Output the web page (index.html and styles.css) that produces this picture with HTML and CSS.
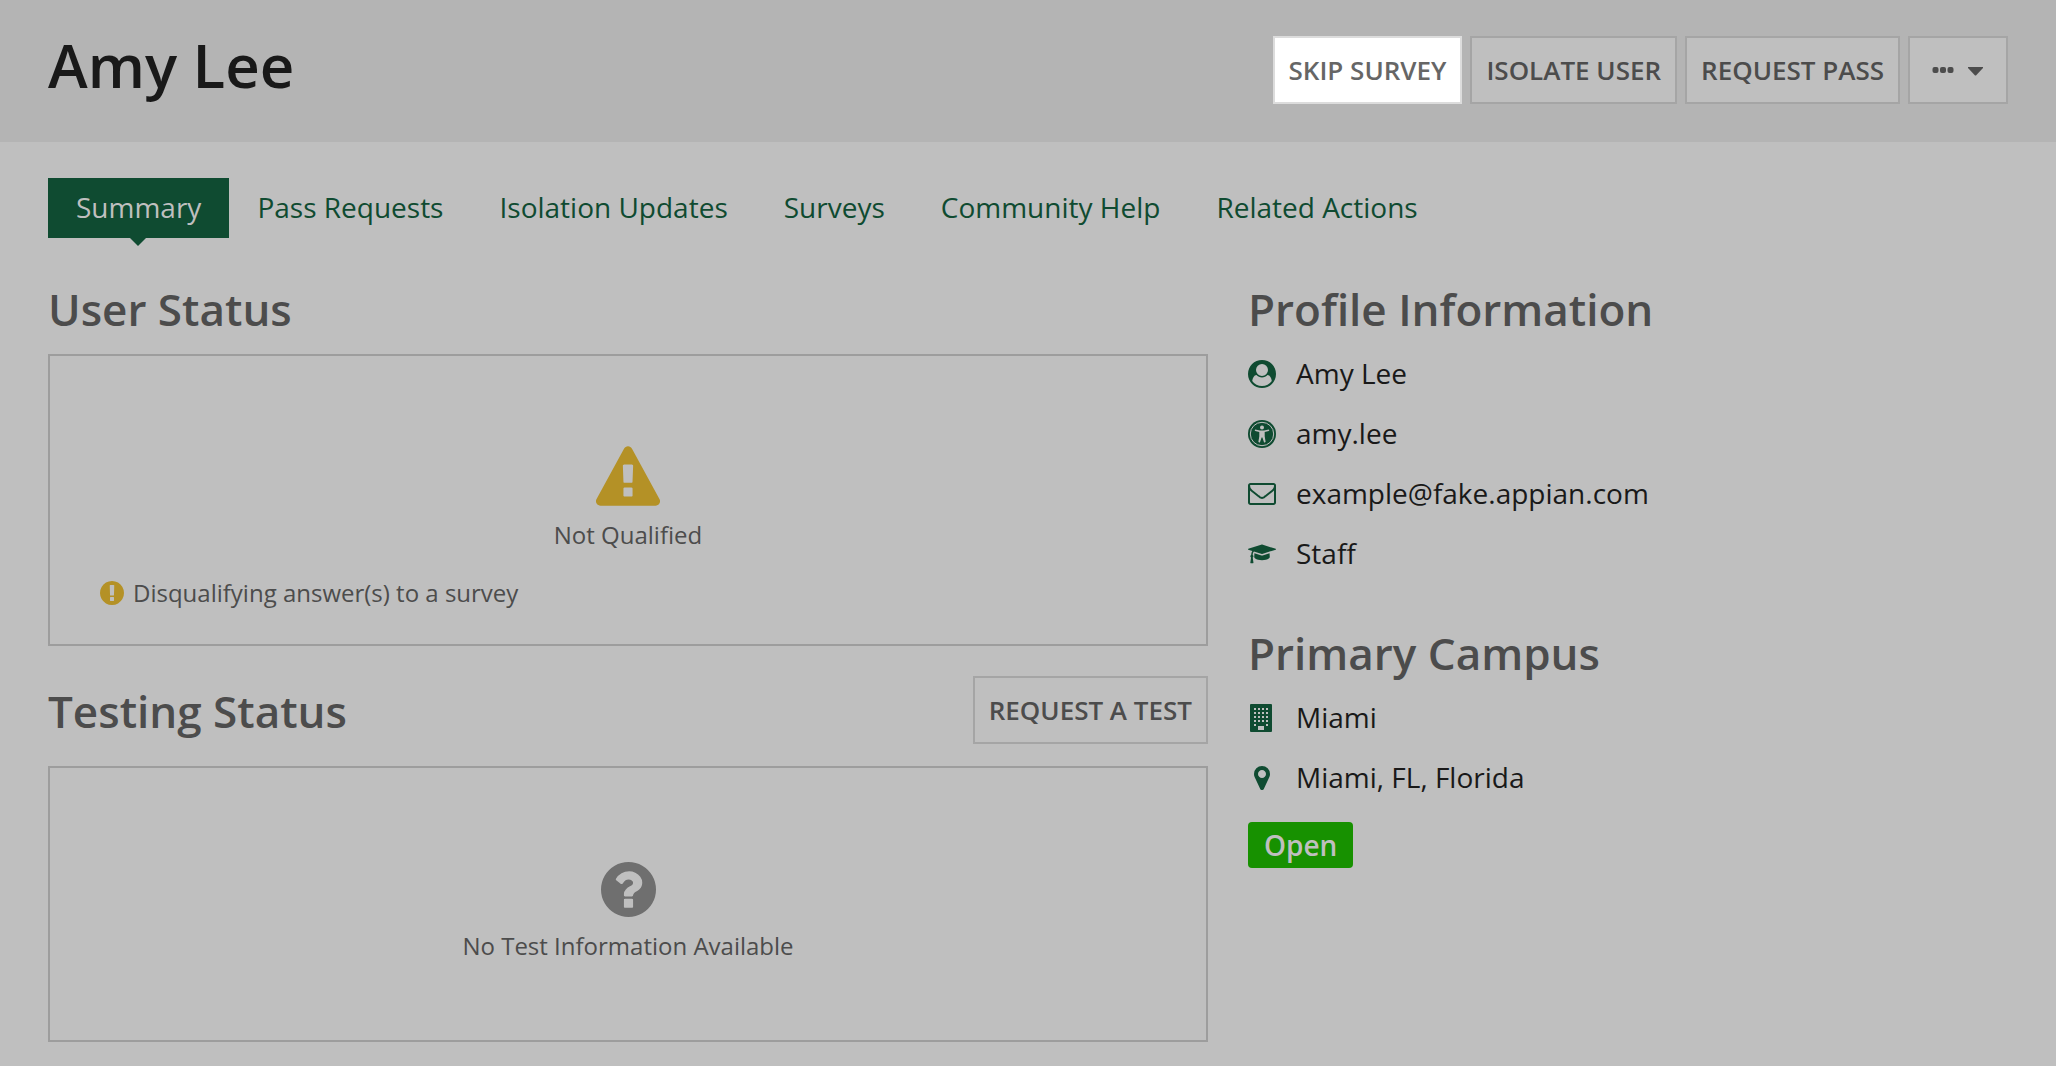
FILE: index.html
```html
<!DOCTYPE html>
<html lang="en">
<head>
<meta charset="utf-8">
<meta name="viewport" content="width=device-width, initial-scale=1">
<title>Amy Lee</title>
<link rel="stylesheet" href="styles.css">
</head>
<body>
<header class="header">
  <h1 class="title">Amy Lee</h1>
  <div class="actions">
    <button type="button" class="button button-active">SKIP SURVEY</button>
    <button type="button" class="button">ISOLATE USER</button>
    <button type="button" class="button">REQUEST PASS</button>
    <button type="button" class="button button-more" aria-label="More actions">
      <svg width="52" height="12" viewBox="0 0 52 12" aria-hidden="true"><rect x="0.500" y="3" width="6" height="6" rx="2"/><rect x="8" y="3" width="6" height="6" rx="2"/><rect x="15.500" y="3" width="6" height="6" rx="2"/><path d="M36 3h15v1l-7 7.500h-1l-7-7.500z"/></svg>
    </button>
  </div>
</header>
<nav class="tabs">
  <a href="#summary" class="tab tab-selected" aria-current="page">Summary</a>
  <a href="#passes" class="tab">Pass Requests</a>
  <a href="#isolation" class="tab">Isolation Updates</a>
  <a href="#surveys" class="tab">Surveys</a>
  <a href="#help" class="tab">Community Help</a>
  <a href="#actions" class="tab">Related Actions</a>
</nav>
<main class="columns">
  <div>
    <section>
      <h2 class="heading">User Status</h2>
      <div class="card card-user">
        <svg class="warning" width="64" height="60" viewBox="0 0 1792 1664" aria-hidden="true"><path d="M1024 1375v-190q0-14-9.500-23.500t-22.500-9.500h-192q-13 0-22.500 9.500t-9.500 23.500v190q0 14 9.500 23.500t22.500 9.500h192q13 0 22.500-9.500t9.500-23.500zm-2-374l18-459q0-12-10-19-13-11-24-11h-220q-11 0-24 11-10 7-10 21l17 457q0 10 10 16.500t24 6.500h185q14 0 23.500-6.500t10.500-16.500zm-14-934l768 1408q35 63-2 126-17 29-46.500 46t-63.500 17h-1536q-34 0-63.500-17t-46.500-46q-37-63-2-126l768-1408q17-31 47-49t65-18 65 18 47 49z"/></svg>
        <p class="status">Not Qualified</p>
        <p class="reason"><svg class="warning" width="24" height="24" viewBox="128 128 1536 1536" aria-hidden="true"><path d="M896 128q209 0 385.500 103t279.500 279.500 103 385.500-103 385.500-279.500 279.500-385.500 103-385.500-103-279.500-279.500-103-385.500 103-385.500 279.500-279.500 385.500-103zm128 1247v-190q0-14-9-23.500t-22-9.500h-192q-13 0-23 10t-10 23v190q0 13 10 23t23 10h192q13 0 22-9.500t9-23.500zm-2-344l18-621q0-12-10-18-10-8-24-8h-220q-14 0-24 8-10 6-10 18l17 621q0 10 10 17.500t24 7.500h185q14 0 23.500-7.500t10.500-17.500z"/></svg>Disqualifying answer(s) to a survey</p>
      </div>
    </section>
    <section>
      <div class="heading-row">
        <h2 class="heading">Testing Status</h2>
        <button type="button" class="button">REQUEST A TEST</button>
      </div>
      <div class="card card-test">
        <svg class="unknown" width="55" height="55" viewBox="128 128 1536 1536" aria-hidden="true"><path d="M1024 1376v-192q0-14-9-23t-23-9h-192q-14 0-23 9t-9 23v192q0 14 9 23t23 9h192q14 0 23-9t9-23zm256-672q0-88-55.500-163t-138.500-116-170-41q-243 0-371 213-15 24 8 42l132 100q7 6 19 6 16 0 25-12 53-68 86-92 34-24 86-24 48 0 85.500 26t37.500 59q0 38-20 61t-68 45q-63 28-115.500 86.500t-52.500 125.500v36q0 14 9 23t23 9h192q14 0 23-9t9-23q0-19 21.500-49.500t54.500-49.500q32-18 49-28.500t46-35 44.500-48 28-60.500 12.500-81zm384 192q0 209-103 385.500t-279.500 279.500-385.500 103-385.500-103-279.500-279.500-103-385.500 103-385.500 279.500-279.500 385.500-103 385.500 103 279.500 279.500 103 385.500z"/></svg>
        <p class="status">No Test Information Available</p>
      </div>
    </section>
  </div>
  <aside class="side">
    <section>
      <h2 class="heading">Profile Information</h2>
      <ul class="facts">
        <li class="fact"><svg class="icon" width="28" height="28" viewBox="0 0 1792 1792" aria-hidden="true"><path d="M1523 1339q-22-155-87.500-257.500t-184.500-118.500q-67 74-159.500 115.500t-195.500 41.500-195.500-41.500-159.500-115.500q-119 16-184.500 118.500t-87.500 257.500q106 150 271 237.500t356 87.500 356-87.500 271-237.500zm-243-699q0-159-112.500-271.500t-271.500-112.500-271.500 112.500-112.500 271.500 112.500 271.500 271.500 112.500 271.500-112.500 112.500-271.500zm512 256q0 182-71 347.500t-190.500 286-285.500 191.500-349 71q-182 0-348-71t-286-191-191-286-71-348 71-348 191-286 286-191 348-71 348 71 286 191 191 286 71 348z"/></svg>Amy Lee</li>
        <li class="fact"><svg class="icon" width="28" height="28" viewBox="0 0 28 28" aria-hidden="true"><circle cx="14" cy="14" r="14"/><circle class="cut-line" cx="14" cy="14" r="11.700"/><circle class="cut" cx="14" cy="7.600" r="2"/><path class="cut" d="M7.200 9.500l4.800 0.900h4l4.800-0.900q1.100 0.700 0 1.400l-4.100 1.200v4.200l0.900 5.400q-0.500 1.100-1.600 0.500l-1.600-4.700h-0.800l-1.600 4.700q-1.100 0.600-1.600-0.500l0.900-5.400v-4.200l-4.100-1.200q-1.100-0.700 0-1.400z"/></svg>amy.lee</li>
        <li class="fact"><svg class="icon" width="28" height="22" viewBox="0 256 1792 1408" aria-hidden="true"><path d="M1664 1504v-768q-32 36-69 66-268 206-426 338-51 43-83 67t-86.500 48.500-102.500 24.500h-2q-48 0-102.500-24.500t-86.500-48.500-83-67q-158-132-426-338-37-30-69-66v768q0 13 9.500 22.500t22.500 9.500h1472q13 0 22.500-9.500t9.500-22.500zm0-1051v-24.500l-.5-13-3-12.500-5.500-9-9-7.500-14-2.500h-1472q-13 0-22.500 9.500t-9.500 22.500q0 168 147 284 193 152 401 317 6 5 35 29.500t46 37.500 44.500 31.500 50.500 27.500 43 9h2q20 0 43-9t50.500-27.500 44.500-31.500 46-37.500 35-29.500q208-165 401-317 54-43 100.500-115.500t46.500-131.500zm128-37v1088q0 66-47 113t-113 47h-1472q-66 0-113-47t-47-113v-1088q0-66 47-113t113-47h1472q66 0 113 47t47 113z"/></svg>example@fake.appian.com</li>
        <li class="fact"><svg class="icon" width="28" height="20" viewBox="0 80 2304 1646" aria-hidden="true"><path d="M1774 836l18 316q4 69-82 128t-235 93.500-323 34.500-323-34.500-235-93.500-82-128l18-316 574 181q22 7 48 7t48-7zm530-324q0 23-22 31l-1120 352q-4 1-10 1t-10-1l-652-206q-43 34-71 111.500t-34 178.500q63 36 63 109 0 69-58 107l58 433q2 14-8 25-9 11-24 11h-192q-15 0-24-11-10-11-8-25l58-433q-58-38-58-107 0-73 65-111 11-207 98-330l-333-104q-22-8-22-31t22-31l1120-352q4-1 10-1t10 1l1120 352q22 8 22 31z"/></svg>Staff</li>
      </ul>
    </section>
    <section>
      <h2 class="heading">Primary Campus</h2>
      <ul class="facts">
        <li class="fact"><svg class="icon" width="28" height="28" viewBox="0 0 28 28" aria-hidden="true"><rect x="2" y="0" width="22" height="28" rx="1"/><path class="cut" d="M6 4h2v2h-2zM10 4h2v2h-2zM14 4h2v2h-2zM18 4h2v2h-2zM6 8h2v2h-2zM10 8h2v2h-2zM14 8h2v2h-2zM18 8h2v2h-2zM6 12h2v2h-2zM10 12h2v2h-2zM14 12h2v2h-2zM18 12h2v2h-2zM6 16h2v2h-2zM10 16h2v2h-2zM14 16h2v2h-2zM18 16h2v2h-2zM6 20h2v2h-2zM18 20h2v2h-2zM10 22h6v4h-6z"/></svg>Miami</li>
        <li class="fact"><svg class="icon" width="28" height="24" viewBox="0 128 1792 1536" aria-hidden="true"><path d="M1152 640q0-106-75-181t-181-75-181 75-75 181 75 181 181 75 181-75 75-181zm256 0q0 109-33 179l-364 774q-16 33-47.500 52t-67.500 19-67.500-19-46.500-52l-365-774q-33-70-33-179 0-212 150-362t362-150 362 150 150 362z"/></svg>Miami, FL, Florida</li>
      </ul>
      <span class="badge">Open</span>
    </section>
  </aside>
</main>
</body>
</html>
```
FILE: styles.css
```css
:root {
  --page: #bfbfbf;
  --green: #0f4b31;
  --muted: #4c4c4c;
}

* {
  box-sizing: border-box;
}

body {
  margin: 0;
  background: var(--page);
  color: #191919;
  font-family: "Open Sans", sans-serif;
  font-size: 28px;
}

h1, h2, p, ul {
  margin: 0;
  padding: 0;
}

svg {
  display: block;
  flex: none;
}

.header {
  display: flex;
  align-items: flex-start;
  justify-content: space-between;
  padding: 36px 48px 38px;
  background: #b4b4b4;
}

.title {
  font-size: 60px;
  line-height: 58px;
  font-weight: 600;
}

.actions {
  display: flex;
  gap: 8px;
}

.button {
  height: 68px;
  padding: 0 14px;
  border: 2px solid #a5a5a5;
  background: var(--page);
  color: var(--muted);
  font-family: inherit;
  font-size: 26px;
  font-weight: 600;
  line-height: 36px;
  white-space: nowrap;
}

.button-active {
  border-color: #dcdcdc;
  background: #fff;
  color: #666;
}

.button-more {
  padding: 0 22px;
  fill: var(--muted);
}

.tabs {
  display: flex;
  padding: 36px 48px 0;
}

.tab {
  position: relative;
  padding: 0 28px 2px;
  color: var(--green);
  line-height: 58px;
  text-decoration: none;
}

.tab-selected {
  background: var(--green);
  color: var(--page);
}

.tab-selected::after {
  content: "";
  position: absolute;
  top: 100%;
  left: 50%;
  margin-left: -9px;
  border: 8px solid transparent;
  border-top-color: var(--green);
  border-bottom: 0;
}

.columns {
  display: grid;
  grid-template-columns: 29fr 19fr;
  gap: 40px;
  padding: 40px 48px 24px;
}

.heading {
  margin-bottom: 14px;
  color: var(--muted);
  font-size: 44px;
  font-weight: 600;
  line-height: 62px;
}

.heading-row {
  display: flex;
  align-items: center;
  justify-content: space-between;
  margin: 30px 0 22px;
}

.heading-row .heading {
  margin: 2px 0 0;
}

.card {
  display: flex;
  flex-direction: column;
  align-items: center;
  border: 2px solid #9d9d9d;
  color: var(--muted);
  font-size: 24px;
  line-height: 32px;
}

.card-user {
  padding: 90px 50px 35px;
}

.card-test {
  padding: 94px 50px 78px;
}

.status {
  margin-top: 13px;
}

.reason {
  display: flex;
  align-items: center;
  align-self: stretch;
  gap: 9px;
  margin-top: 26px;
}

.warning {
  fill: #b49126;
}

.unknown {
  fill: #6f6f6f;
}

.side {
  display: flex;
  flex-direction: column;
  gap: 50px;
}

.facts {
  display: grid;
  gap: 22px;
  list-style: none;
}

.fact {
  display: flex;
  align-items: center;
  gap: 20px;
  line-height: 38px;
}

.icon {
  margin-top: 2px;
  fill: var(--green);
}

.cut {
  fill: var(--page);
}

.cut-line {
  fill: none;
  stroke: var(--page);
}

.badge {
  display: inline-block;
  margin-top: 26px;
  padding: 0 16px;
  border-radius: 4px;
  background: #179100;
  color: var(--page);
  font-weight: 600;
  line-height: 46px;
}
```
